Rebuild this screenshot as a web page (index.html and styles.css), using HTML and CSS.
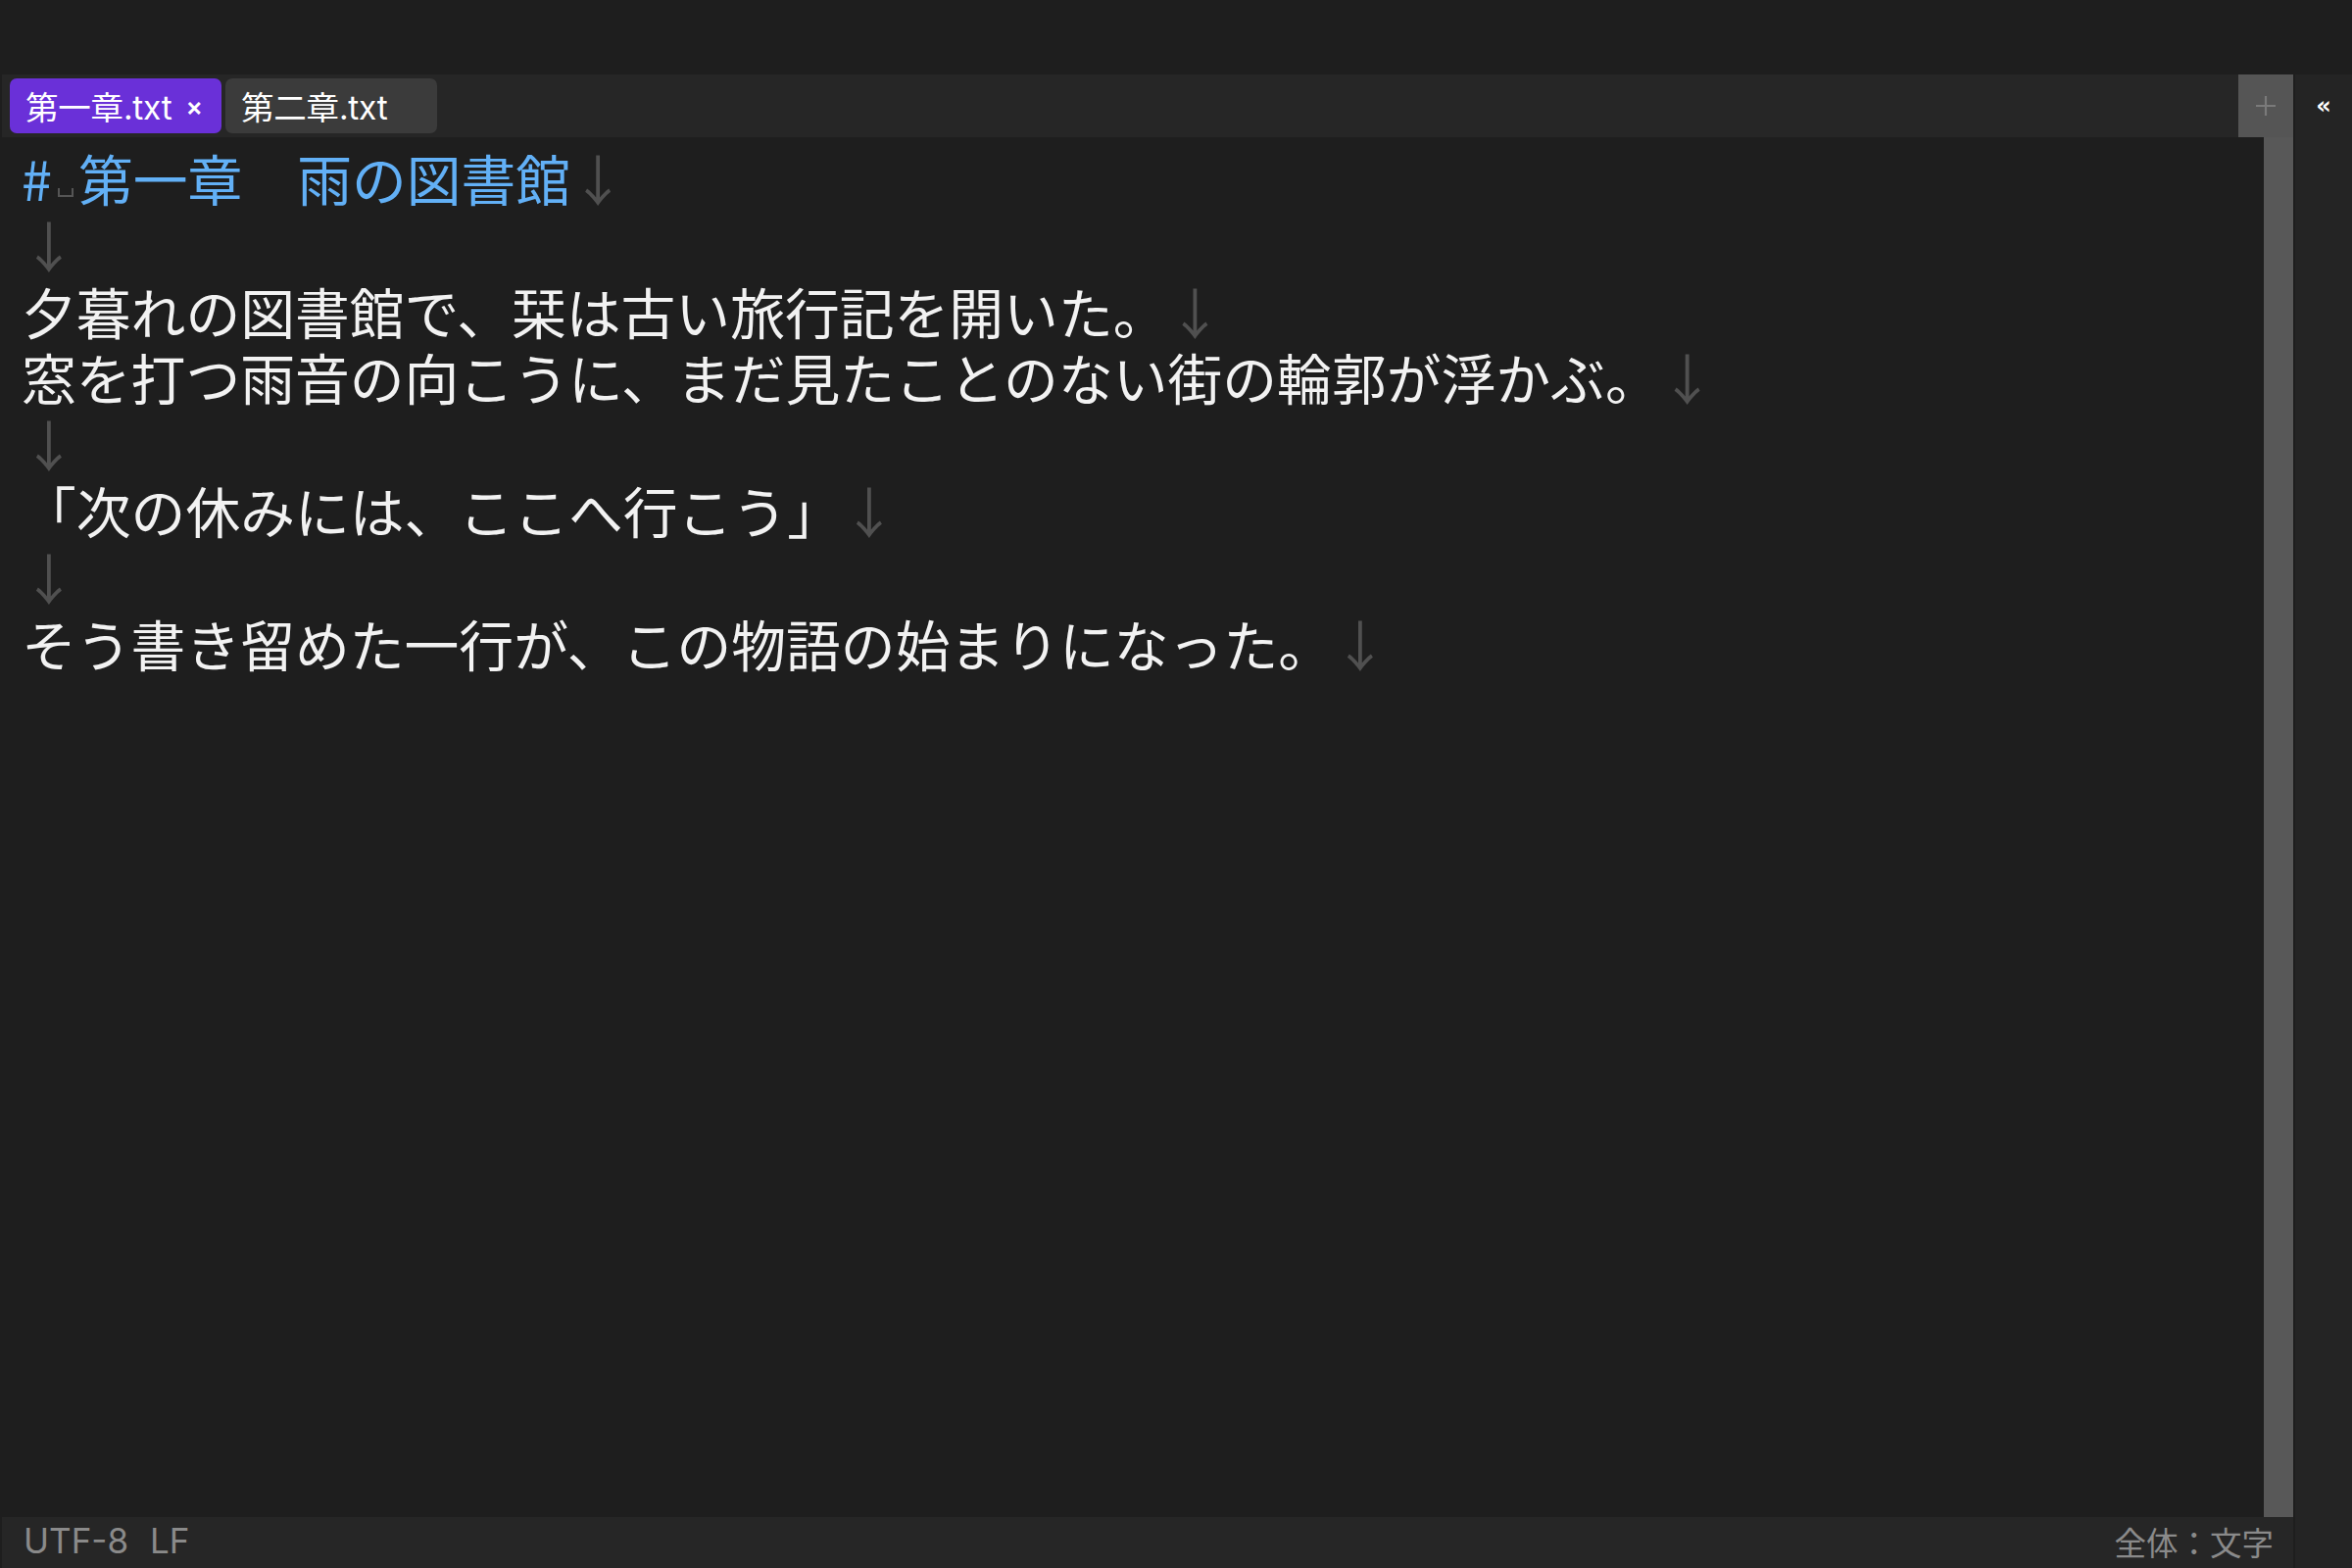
FILE: index.html
```html
<!DOCTYPE html>
<html lang="ja">
<head>
<meta charset="utf-8">
<title>第一章.txt</title>
<link rel="stylesheet" href="styles.css">
</head>
<body>
<div class="app">
  <div class="topbar"></div>
  <div class="body">
    <div class="main">
      <div class="tabbar">
        <div class="tabs">
          <div class="tab active"><span class="tab-name">第一章.txt</span><span class="tab-close">×</span></div>
          <div class="tab"><span class="tab-name">第二章.txt</span></div>
        </div>
        <div class="add-btn">
          <svg width="22" height="22" viewBox="0 0 22 22"><path d="M11 1V21M1 11H21" stroke="#7a7a7a" stroke-width="2.2" fill="none"/></svg>
        </div>
      </div>
      <div class="editor-row">
        <div class="editor">
          <div class="line heading"><span class="hash">#</span><span class="sp"></span>第一章　雨の図書館<span class="eol">↓</span></div>
          <div class="line"><span class="eol">↓</span></div>
          <div class="line">夕暮れの図書館で、栞は古い旅行記を開いた。<span class="eol">↓</span></div>
          <div class="line">窓を打つ雨音の向こうに、まだ見たことのない街の輪郭が浮かぶ。<span class="eol">↓</span></div>
          <div class="line"><span class="eol">↓</span></div>
          <div class="line">「次の休みには、ここへ行こう」<span class="eol">↓</span></div>
          <div class="line"><span class="eol">↓</span></div>
          <div class="line">そう書き留めた一行が、この物語の始まりになった。<span class="eol">↓</span></div>
        </div>
        <div class="scrollbar"></div>
      </div>
      <div class="statusbar">
        <div class="status-left">UTF-8<span class="gap"></span>LF</div>
        <div class="status-right">全体：文字</div>
      </div>
    </div>
    <div class="side">
      <div class="side-head">«</div>
    </div>
  </div>
</div>
</body>
</html>
```
FILE: styles.css
```css
html, body {
  margin: 0;
  padding: 0;
  background: #1e1e1e;
}
body {
  width: 2400px;
  height: 1600px;
  overflow: hidden;
  font-family: "Noto Sans CJK JP", "Noto Sans", sans-serif;
  color: #f2f2f2;
}
.app {
  display: flex;
  flex-direction: column;
  width: 2400px;
  height: 1600px;
}
.topbar {
  height: 76px;
  flex: none;
  background: #1e1e1e;
}
.body {
  flex: 1;
  display: flex;
  min-height: 0;
}
.main {
  flex: 1;
  display: flex;
  flex-direction: column;
  padding-left: 2px;
  min-width: 0;
}
.tabbar {
  height: 64px;
  flex: none;
  display: flex;
  align-items: stretch;
  background: #262626;
}
.tabs {
  flex: 1;
  display: flex;
  align-items: center;
  gap: 4px;
  padding-left: 8px;
}
.tab {
  width: 216px;
  height: 56px;
  box-sizing: border-box;
  border-radius: 7px;
  background: #3b3b3b;
  display: flex;
  align-items: center;
  justify-content: space-between;
  padding: 0 19px 0 16px;
  font-family: "Inter", "Noto Sans CJK JP", sans-serif;
  font-size: 33.5px;
  color: #ffffff;
}
.tab.active {
  background: #6a30d8;
}
.tab-name {
  letter-spacing: -0.2px;
  position: relative;
  top: -1px;
}
.tab-close {
  font-size: 26px;
  font-weight: 600;
}
.add-btn {
  width: 56px;
  flex: none;
  background: #555555;
  display: flex;
  align-items: center;
  justify-content: center;
}
.editor-row {
  flex: 1;
  display: flex;
  min-height: 0;
}
.editor {
  flex: 1;
  padding: 7px 0 0 20px;
  font-size: 55.8px;
  line-height: 67.8px;
  color: #f2f2f2;
  overflow: hidden;
}
.line {
  height: 67.8px;
  white-space: pre;
}
.heading {
  color: #62b0f6;
}
.hash {
  display: inline-block;
  width: 34px;
}
.sp {
  display: inline-block;
  width: 12px;
  height: 7px;
  border: 2px solid #555555;
  border-top: none;
  margin: 0 5px 0 3px;
  vertical-align: 4px;
}
.eol {
  color: #505050;
}
.scrollbar {
  width: 30px;
  flex: none;
  background: #585858;
}
.statusbar {
  height: 52px;
  flex: none;
  background: #262626;
  display: flex;
  align-items: center;
  justify-content: space-between;
  padding: 0 20px 4px 22px;
  box-sizing: border-box;
  color: #8a8a8a;
}
.status-left {
  font-family: "Inter", "Noto Sans", sans-serif;
  font-size: 35px;
  display: flex;
  align-items: center;
}
.gap {
  display: inline-block;
  width: 22px;
}
.status-right {
  font-size: 32.5px;
}
.side {
  width: 58px;
  flex: none;
  border-left: 2px solid #1e1e1e;
  background: #242424;
}
.side-head {
  height: 64px;
  display: flex;
  align-items: center;
  justify-content: center;
  color: #ffffff;
  font-family: "DejaVu Sans", sans-serif;
  font-size: 24px;
  font-weight: bold;
}
```
